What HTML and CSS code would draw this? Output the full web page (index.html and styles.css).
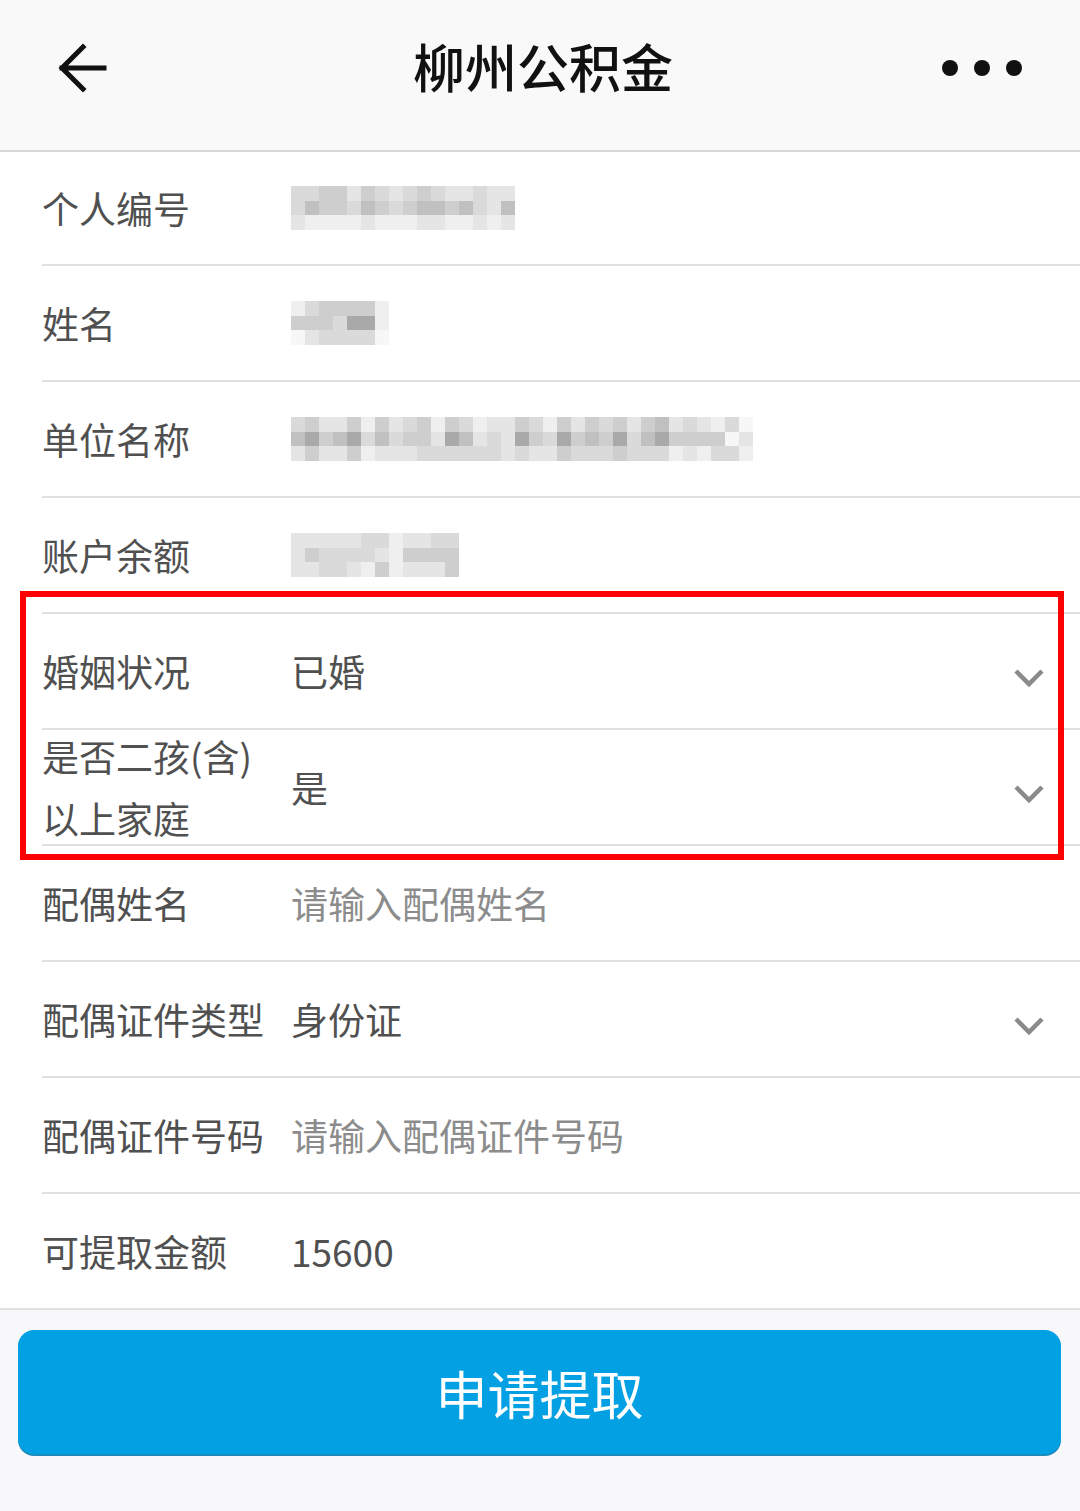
FILE: index.html
```html
<!DOCTYPE html>
<html lang="zh-CN">
<head>
<meta charset="utf-8">
<title>柳州公积金</title>
<link rel="stylesheet" href="styles.css">
</head>
<body>
<header class="topbar">
  <svg class="back" viewBox="0 0 60 60" width="60" height="60"><path d="M52 30 H10 M31 9 L10 30 L31 51" fill="none" stroke="#111" stroke-width="5" stroke-linecap="square"/></svg>
  <h1 class="title">柳州公积金</h1>
  <div class="more"><span></span><span></span><span></span></div>
</header>

<main class="form">
  <div class="row">
    <div class="label">个人编号</div>
    <div class="value">
      <div class="px">
        <i class="c"></i><i class="c"></i><i class="b"></i>
        <i class="c"></i><i class="e"></i><i class="a"></i>
        <i class="d"></i><i class="d"></i><i class="a"></i>
        <i class="d"></i><i class="d"></i><i class="a"></i>
        <i class="b"></i><i class="c"></i><i class="a"></i>
        <i class="d"></i><i class="e"></i><i class="b"></i>
        <i class="c"></i><i class="d"></i><i class="a"></i>
        <i class="b"></i><i class="c"></i><i class="a"></i>
        <i class="c"></i><i class="d"></i><i class="a"></i>
        <i class="d"></i><i class="e"></i><i class="b"></i>
        <i class="c"></i><i class="e"></i><i class="b"></i>
        <i class="b"></i><i class="d"></i><i class="a"></i>
        <i class="b"></i><i class="e"></i><i class="a"></i>
        <i class="c"></i><i class="c"></i><i class="b"></i>
        <i class="b"></i><i class="b"></i><i class="a"></i>
        <i class="b"></i><i class="e"></i><i class="b"></i>
      </div>
    </div>
  </div>
  <div class="row">
    <div class="label">姓名</div>
    <div class="value">
      <div class="px">
        <i class="a"></i><i class="d"></i><i class="w"></i>
        <i class="c"></i><i class="d"></i><i class="b"></i>
        <i class="d"></i><i class="d"></i><i class="c"></i>
        <i class="d"></i><i class="c"></i><i class="c"></i>
        <i class="d"></i><i class="f"></i><i class="c"></i>
        <i class="d"></i><i class="f"></i><i class="c"></i>
        <i class="a"></i><i class="a"></i><i class="w"></i>
      </div>
    </div>
  </div>
  <div class="row">
    <div class="label">单位名称</div>
    <div class="value">
      <div class="px">
        <i class="c"></i><i class="e"></i><i class="b"></i>
        <i class="d"></i><i class="f"></i><i class="d"></i>
        <i class="b"></i><i class="d"></i><i class="b"></i>
        <i class="b"></i><i class="e"></i><i class="b"></i>
        <i class="d"></i><i class="f"></i><i class="d"></i>
        <i class="a"></i><i class="c"></i><i class="a"></i>
        <i class="d"></i><i class="e"></i><i class="b"></i>
        <i class="b"></i><i class="c"></i><i class="b"></i>
        <i class="c"></i><i class="d"></i><i class="b"></i>
        <i class="d"></i><i class="d"></i><i class="c"></i>
        <i class="a"></i><i class="b"></i><i class="c"></i>
        <i class="d"></i><i class="f"></i><i class="c"></i>
        <i class="c"></i><i class="e"></i><i class="c"></i>
        <i class="a"></i><i class="b"></i><i class="c"></i>
        <i class="b"></i><i class="c"></i><i class="c"></i>
        <i class="b"></i><i class="b"></i><i class="b"></i>
        <i class="d"></i><i class="f"></i><i class="c"></i>
        <i class="c"></i><i class="d"></i><i class="b"></i>
        <i class="a"></i><i class="c"></i><i class="b"></i>
        <i class="d"></i><i class="f"></i><i class="d"></i>
        <i class="b"></i><i class="d"></i><i class="c"></i>
        <i class="d"></i><i class="e"></i><i class="c"></i>
        <i class="c"></i><i class="d"></i><i class="c"></i>
        <i class="d"></i><i class="f"></i><i class="d"></i>
        <i class="b"></i><i class="c"></i><i class="c"></i>
        <i class="d"></i><i class="e"></i><i class="c"></i>
        <i class="e"></i><i class="f"></i><i class="c"></i>
        <i class="b"></i><i class="d"></i><i class="a"></i>
        <i class="c"></i><i class="d"></i><i class="b"></i>
        <i class="b"></i><i class="d"></i><i class="a"></i>
        <i class="a"></i><i class="d"></i><i class="c"></i>
        <i class="c"></i><i class="w"></i><i class="c"></i>
        <i class="w"></i><i class="b"></i><i class="a"></i>
      </div>
    </div>
  </div>
  <div class="row">
    <div class="label">账户余额</div>
    <div class="value">
      <div class="px">
        <i class="b"></i><i class="b"></i><i class="b"></i>
        <i class="b"></i><i class="d"></i><i class="b"></i>
        <i class="b"></i><i class="c"></i><i class="c"></i>
        <i class="b"></i><i class="c"></i><i class="c"></i>
        <i class="b"></i><i class="c"></i><i class="b"></i>
        <i class="c"></i><i class="c"></i><i class="a"></i>
        <i class="c"></i><i class="b"></i><i class="d"></i>
        <i class="a"></i><i class="a"></i><i class="a"></i>
        <i class="b"></i><i class="d"></i><i class="b"></i>
        <i class="b"></i><i class="d"></i><i class="b"></i>
        <i class="c"></i><i class="d"></i><i class="b"></i>
        <i class="c"></i><i class="d"></i><i class="d"></i>
      </div>
    </div>
  </div>
  <div class="row">
    <div class="label">婚姻状况</div>
    <div class="value">已婚</div>
    <svg class="chev" viewBox="0 0 32 20" width="32" height="20"><path d="M3 3 L16 16 L29 3" fill="none" stroke="#8a8a8a" stroke-width="4.5"/></svg>
  </div>
  <div class="row">
    <div class="label two">是否二孩(含)以上家庭</div>
    <div class="value">是</div>
    <svg class="chev" viewBox="0 0 32 20" width="32" height="20"><path d="M3 3 L16 16 L29 3" fill="none" stroke="#8a8a8a" stroke-width="4.5"/></svg>
  </div>
  <div class="row">
    <div class="label">配偶姓名</div>
    <div class="value placeholder">请输入配偶姓名</div>
  </div>
  <div class="row">
    <div class="label">配偶证件类型</div>
    <div class="value">身份证</div>
    <svg class="chev" viewBox="0 0 32 20" width="32" height="20"><path d="M3 3 L16 16 L29 3" fill="none" stroke="#8a8a8a" stroke-width="4.5"/></svg>
  </div>
  <div class="row">
    <div class="label">配偶证件号码</div>
    <div class="value placeholder">请输入配偶证件号码</div>
  </div>
  <div class="row last">
    <div class="label">可提取金额</div>
    <div class="value">15600</div>
  </div>
  <div class="highlight"></div>
</main>

<footer class="actions">
  <button class="submit">申请提取</button>
</footer>
</body>
</html>
```

FILE: styles.css
```css
* { box-sizing: border-box; }
html, body {
  margin: 0;
  padding: 0;
}
body {
  width: 1080px;
  min-height: 1511px;
  background: #f8f8fa;
  font-family: "Noto Sans CJK SC", "Noto Sans", sans-serif;
  color: #555;
}
.topbar {
  height: 152px;
  background: #f9f9f9;
  border-bottom: 2px solid #d6d6d6;
  display: flex;
  align-items: center;
  justify-content: space-between;
  padding: 0 52px 14px 52px;
}
.back { display: block; }
.title {
  margin: 0 0 4px 32px;
  font-size: 52px;
  font-weight: 500;
  color: #111;
  letter-spacing: 0;
  line-height: 1;
}
.more {
  display: flex;
  gap: 16px;
  margin-right: 6px;
}
.more span {
  width: 16px;
  height: 16px;
  border-radius: 50%;
  background: #111;
}
.form {
  position: relative;
  background: #fff;
}
.row {
  margin-left: 42px;
  height: 116px;
  border-bottom: 2px solid #e0e0e0;
  display: flex;
  align-items: center;
  font-size: 37px;
}
.row:first-child { height: 114px; }
.row.last {
  margin-left: 0;
  padding-left: 42px;
}
.label {
  width: 249px;
  flex: none;
  color: #505050;
  line-height: 1.2;
}
.label.two {
  line-height: 62px;
  padding-right: 30px;
}
.value {
  flex: 1;
  color: #505050;
  line-height: 1.2;
}
.value.placeholder { color: #8c8c8c; }
.chev {
  flex: none;
  margin-right: 35px;
  margin-top: 14px;
}
.px {
  display: grid;
  grid-auto-flow: column;
  grid-template-rows: repeat(3, 14.5px);
  grid-auto-columns: 14px;
  width: max-content;
  filter: blur(0.6px);
}
.px i { display: block; }
.px .w { background: #f7f7f7; }
.px .a { background: #efefef; }
.px .b { background: #e5e5e5; }
.px .c { background: #dadada; }
.px .d { background: #cecece; }
.px .e { background: #c0c0c0; }
.px .f { background: #a9a9a9; }
.highlight {
  position: absolute;
  left: 20px;
  top: 439px;
  width: 1044px;
  height: 269px;
  border: 6px solid #f00;
  pointer-events: none;
}
.actions {
  padding: 20px 19px 20px 18px;
}
.submit {
  display: block;
  width: 100%;
  height: 124px;
  border: none;
  border-radius: 16px;
  background: #03a0e4;
  box-shadow: 0 2px 0 #1c8cbd;
  color: #fff;
  font-family: "Noto Sans CJK SC", sans-serif;
  font-size: 52px;
  font-weight: 400;
  padding: 0;
}
```
